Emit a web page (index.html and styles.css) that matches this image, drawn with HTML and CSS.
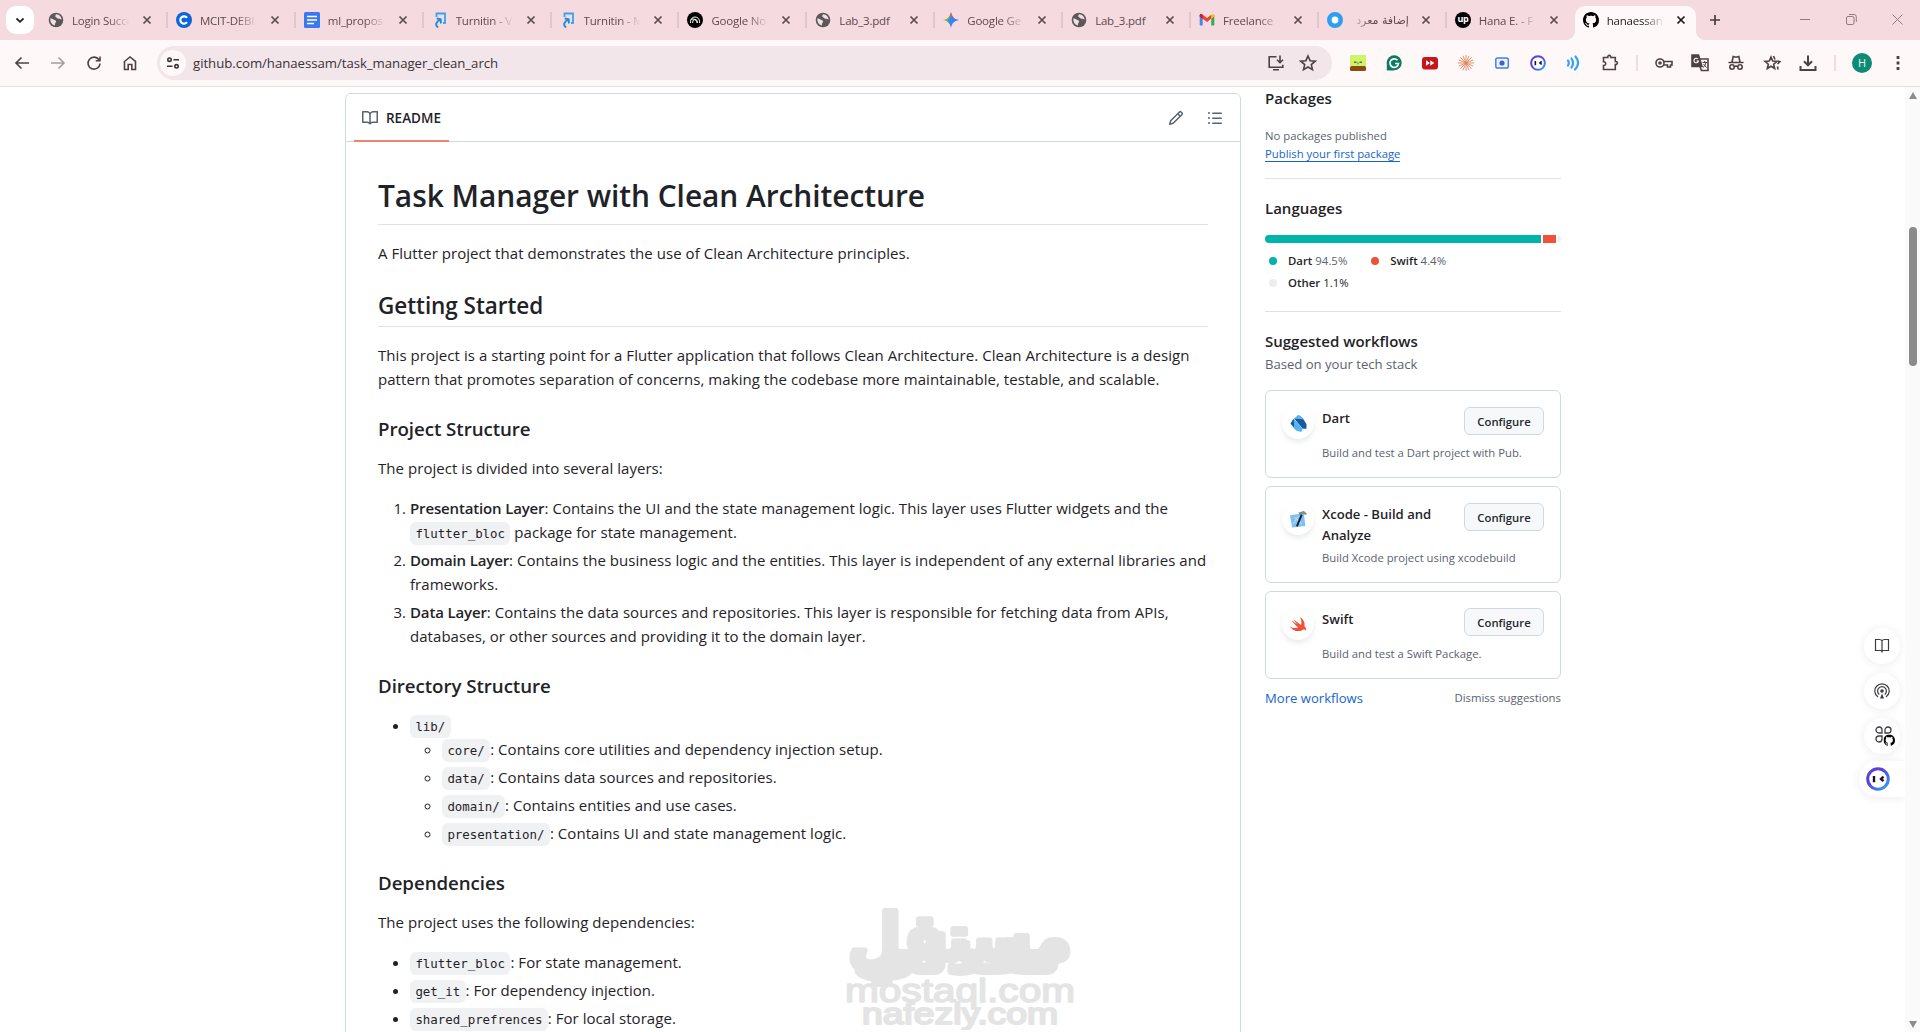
FILE: index.html
```html
<!DOCTYPE html>
<html lang="en">
  <head>
    <meta charset="UTF-8" />
    <meta name="viewport" content="width=device-width, initial-scale=1.0" />
    <title>hanaessam/task_manager_clean_arch</title>
    <link rel="stylesheet" href="styles.css">
  </head>
  <body>
    <!-- Shared icons -->
    <svg class="sprite">
      <symbol id="close" viewBox="0 0 10 10"><path d="M1.5 1.5l7 7M8.5 1.5l-7 7" stroke="currentColor" stroke-width="1.7" /></symbol>
      <symbol id="globe" viewBox="0 0 16 16">
        <circle cx="8" cy="8" r="7.3" fill="#5b585c" />
        <path d="M2.4 6.3c2.5.4 3 1.5 4.7 1.9 1.2.3 1.3 1.6.6 2.3-.6.7-.8 1.5-.7 2.9-3-.4-5-3-4.6-7.1zM8.2 2.2c-1 1.100-1.400 2.200-.4 2.800 1.200.6 1.500 1.900 3 1.700 1.300-.2 1.800.5 2.700 1 .1-2.600-1.900-5.300-5.300-5.500z" fill="#f0dfe3" />
      </symbol>
      <symbol id="turnitin" viewBox="0 0 16 16">
        <path d="M4.500 5V1.500h8.500v9.500H11" fill="none" stroke="#36a5ee" stroke-width="1.800" />
        <path d="M6 15.500c-3-2.500-2.500-5.500 2.500-8M4.800 6.500l3.900.8.2 4.200" fill="none" stroke="#1b8ce0" stroke-width="1.900" />
      </symbol>
      <symbol id="github" viewBox="0 0 16 16"><path d="M8 0C3.580 0 0 3.580 0 8c0 3.540 2.290 6.530 5.470 7.590.4.070.55-.17.55-.38 0-.19-.01-.82-.01-1.490-2.010.37-2.530-.49-2.690-.94-.09-.23-.48-.94-.82-1.130-.28-.15-.68-.52-.01-.53.63-.01 1.080.58 1.230.82.720 1.210 1.870.87 2.330.66.070-.52.280-.87.510-1.070-1.780-.2-3.640-.89-3.640-3.950 0-.87.310-1.590.82-2.150-.08-.2-.36-1.020.08-2.120 0 0 .67-.21 2.200.82.640-.18 1.320-.27 2-.27s1.360.09 2 .27c1.530-1.040 2.200-.82 2.200-.82.440 1.100.160 1.920.080 2.120.510.56.82 1.270.82 2.150 0 3.070-1.870 3.750-3.650 3.950.290.25.54.730.54 1.480 0 1.070-.01 1.930-.01 2.200 0 .21.150.46.55.38A8.010 8.010 0 0 0 16 8c0-4.420-3.580-8-8-8z" /></symbol>
      <symbol id="book" viewBox="0 0 16 16"><path d="M0 1.750A.75.75 0 0 1 .75 1h4.253c1.227 0 2.317.59 3 1.501A3.743 3.743 0 0 1 11.006 1h4.245a.75.75 0 0 1 .75.75v10.500a.75.75 0 0 1-.75.75h-4.507a2.250 2.250 0 0 0-1.591.659l-.622.621a.75.75 0 0 1-1.060 0l-.622-.621A2.250 2.250 0 0 0 5.258 13H.75a.75.75 0 0 1-.75-.75Zm7.251 10.324.004-5.073-.002-2.253A2.250 2.250 0 0 0 5.003 2.500H1.500v9h3.757a3.750 3.750 0 0 1 1.994.574ZM8.755 4.750l-.004 7.322a3.752 3.752 0 0 1 1.992-.572H14.500v-9h-3.495a2.250 2.250 0 0 0-2.250 2.250Z" /></symbol>
      <symbol id="robot" viewBox="0 0 24 24">
        <linearGradient id="ring" x1="0" y1="0" x2="1" y2="1"><stop offset="0.400" stop-color="#5b3fe0" /><stop offset="1" stop-color="#2aa8f5" /></linearGradient>
        <circle cx="12" cy="12" r="10.300" fill="#fff" stroke="url(#ring)" stroke-width="3" />
        <path d="M8 9v6.200M17.500 9.600l-2.500 2.300 2.500 2.300" fill="none" stroke="#161628" stroke-width="2.400" />
      </symbol>
    </svg>

    <!-- Browser tabs -->
    <div class="tab-strip">
      <button class="tab-search"><svg width="10" height="10" viewBox="0 0 10 10"><path d="M1.500 3.500L5 6.800l3.500-3.300" fill="none" stroke="#222" stroke-width="1.800" /></svg></button>
      <div class="tab"><svg class="favicon"><use href="#globe" /></svg><span class="tab-title">Login Succe</span><svg class="close"><use href="#close" /></svg></div>
      <div class="tab">
        <svg class="favicon" viewBox="0 0 16 16"><circle cx="8" cy="8" r="8" fill="#0b64d8" /><path d="M11 5.800a3.700 3.700 0 1 0 0 4.400" fill="none" stroke="#fff" stroke-width="2.200" /></svg>
        <span class="tab-title">MCIT-DEBI</span><svg class="close"><use href="#close" /></svg>
      </div>
      <div class="tab">
        <svg class="favicon" viewBox="0 0 16 16"><rect width="16" height="16" rx="1.500" fill="#3b78f0" /><path d="M3 4.500h10M3 8h10M3 11.500h7" stroke="#fff" stroke-width="1.600" /></svg>
        <span class="tab-title">ml_propos</span><svg class="close"><use href="#close" /></svg>
      </div>
      <div class="tab"><svg class="favicon"><use href="#turnitin" /></svg><span class="tab-title">Turnitin - V</span><svg class="close"><use href="#close" /></svg></div>
      <div class="tab"><svg class="favicon"><use href="#turnitin" /></svg><span class="tab-title">Turnitin - M</span><svg class="close"><use href="#close" /></svg></div>
      <div class="tab">
        <svg class="favicon" viewBox="0 0 16 16"><circle cx="8" cy="8" r="8" fill="#000" /><path d="M3.500 11V9.500a4.500 4.500 0 0 1 9 0V11M5.700 11V9.800a2.300 2.300 0 0 1 4.600 0V11M4 7.500c3-1.500 5.500.5 6.300 3.500" fill="none" stroke="#fff" stroke-width="1" /></svg>
        <span class="tab-title">Google No</span><svg class="close"><use href="#close" /></svg>
      </div>
      <div class="tab"><svg class="favicon"><use href="#globe" /></svg><span class="tab-title whole">Lab_3.pdf</span><svg class="close"><use href="#close" /></svg></div>
      <div class="tab">
        <svg class="favicon" viewBox="0 0 16 16">
          <linearGradient id="gem" x1="0" y1="0.200" x2="1" y2="0.600"><stop offset="0.100" stop-color="#f2b52a" /><stop offset="0.350" stop-color="#58b368" /><stop offset="0.500" stop-color="#3a82f6" /></linearGradient>
          <path d="M8 0c.8 4.500 3 7 8 8-5 1-7.200 3.500-8 8-.8-4.500-3-7-8-8 5-1 7.200-3.500 8-8z" fill="url(#gem)" /><path d="M8 0c.4 2.200 1 3.700 2.200 5L6.300 4.500C7.200 3.300 7.700 1.800 8 0z" fill="#e8584a" />
        </svg>
        <span class="tab-title">Google Ge</span><svg class="close"><use href="#close" /></svg>
      </div>
      <div class="tab"><svg class="favicon"><use href="#globe" /></svg><span class="tab-title whole">Lab_3.pdf</span><svg class="close"><use href="#close" /></svg></div>
      <div class="tab">
        <svg class="favicon" viewBox="0 0 16 16"><path d="M.7 3h3v10.500H1.500a.8.800 0 0 1-.8-.8z" fill="#4285f4" /><path d="M12.300 3h3v9.700a.8.800 0 0 1-.8.800h-2.200z" fill="#34a853" /><path d="M.7 3.600C.7 2 2.500 1.700 3.700 2.700L8 6l4.300-3.300V6.500L8 9.900.7 4.500z" fill="#ea4335" /><path d="M12.300 2.700c1.200-1 3-.6 3 .9v1l-3 2.300z" fill="#fbbc04" /><path d="M.7 3.600C.7 2 2.500 1.700 3.700 2.700v4.100l-3-2.200z" fill="#c5221f" /></svg>
        <span class="tab-title">Freelance</span><svg class="close"><use href="#close" /></svg>
      </div>
      <div class="tab">
        <svg class="favicon" viewBox="0 0 16 16"><circle cx="8" cy="8" r="5.700" fill="#fff" stroke="#2d9ff0" stroke-width="4.600" /></svg>
        <span class="tab-title rtl" dir="rtl">إضافة معرد</span><svg class="close"><use href="#close" /></svg>
      </div>
      <div class="tab last">
        <span class="favicon up">up</span>
        <span class="tab-title">Hana E. - F</span><svg class="close"><use href="#close" /></svg>
      </div>
      <div class="tab active"><svg class="favicon"><use href="#github" /></svg><span class="tab-title">hanaessan</span><svg class="close"><use href="#close" /></svg></div>
      <svg class="new-tab" viewBox="0 0 12 12"><path d="M6 1v10M1 6h10" stroke="#4a3a3f" stroke-width="1.700" /></svg>
      <div class="window-buttons">
        <svg width="11" height="11" viewBox="0 0 11 11"><path d="M0 5.500h10" stroke="#8f7c81" /></svg>
        <svg width="11" height="11" viewBox="0 0 11 11" fill="none" stroke="#8f7c81"><rect x=".5" y="2.500" width="7.500" height="8" rx="1.500" /><path d="M3 .5h5a2.300 2.300 0 0 1 2.300 2.300V8" /></svg>
        <svg width="11" height="11" viewBox="0 0 11 11"><path d="M.5.5l10 10M10.500.5l-10 10" stroke="#8f7c81" /></svg>
      </div>
    </div>

    <!-- Address bar -->
    <div class="toolbar">
      <span class="tool"><svg viewBox="0 0 18 18"><path d="M16 9H3.500M8.500 3.500L3 9l5.500 5.500" /></svg></span>
      <span class="tool disabled"><svg viewBox="0 0 18 18"><path d="M2 9h12.500M9.500 3.500L15 9l-5.500 5.500" /></svg></span>
      <span class="tool"><svg viewBox="0 0 18 18"><path d="M14 5.800A6 6 0 1 0 15 9.500M15 2.500v4.300h-4.300" /></svg></span>
      <span class="tool"><svg viewBox="0 0 18 18"><path d="M3.500 7.500L9 3l5.500 4.500V15.500h-3.700v-5H7.200v5H3.500z" /></svg></span>
      <div class="omnibox">
        <span class="site-info"><svg viewBox="0 0 16 16"><circle cx="4.500" cy="4.700" r="1.700" /><path d="M8.500 4.700H14M2 11.300h5.500" /><circle cx="11.500" cy="11.300" r="1.700" /></svg></span>
        <span class="url">github.com/hanaessam/task_manager_clean_arch</span>
        <svg class="box-icon" viewBox="0 0 18 18"><path d="M9.500 2.800H2.200v10.400h13.600v-2.500M6 15.700h6M13 1.500v6.800M10 5.700l3 3 3-3" /></svg>
        <svg class="box-icon" viewBox="0 0 18 18"><path d="M9 2l2.100 4.700 5.100.5-3.900 3.400 1.200 5L9 13l-4.500 2.600 1.200-5-3.900-3.400 5.100-.5z" /></svg>
      </div>
      <div class="extensions">
        <span class="tool"><svg class="ext" viewBox="0 0 16 16"><path d="M0 0h16v11H0z" fill="#cdf56b" /><rect y="11" width="16" height="5" rx="1.500" fill="#8c4a0c" /><path d="M4 7.200h2.500M7.500 8.400h1M9.500 7.200H12" stroke="#6a6a30" /></svg></span>
        <span class="tool"><svg class="ext" viewBox="0 0 16 16"><circle cx="8.200" cy="7.800" r="7.500" fill="#0d7a5c" /><path d="M.8 8v7.500H8z" fill="#0d7a5c" /><path d="M11.500 5.300a4.300 4.300 0 1 0 1 3.200H9" fill="none" stroke="#fff" stroke-width="1.700" /></svg></span>
        <span class="tool"><svg class="ext" viewBox="0 0 16 16"><rect y="2" width="16" height="12.500" rx="3" fill="#c4161b" /><path d="M4 5.300L8 8l-4 2.700zM8.300 5.300l4 2.700-4 2.700z" fill="#fff" /></svg></span>
        <span class="tool"><svg class="ext" viewBox="0 0 16 16"><path d="M8 0v16M0 8h16M2.300 2.300l11.400 11.400M13.700 2.300L2.300 13.700M5 .8l6 14.400M11 .8L5 15.200M.8 5l14.400 6M.8 11l14.400-6" stroke="#e28a61" stroke-width=".9" /></svg></span>
        <span class="tool"><svg class="ext" viewBox="0 0 16 16"><rect x="1.800" y="3" width="12.500" height="10" rx="1.800" fill="#eef5ff" stroke="#3587e8" stroke-width="1.500" /><circle cx="8" cy="8" r="2.600" fill="#4b5bd6" /></svg></span>
        <span class="tool"><svg class="ext"><use href="#robot" /></svg></span>
        <span class="tool"><svg class="ext" viewBox="0 0 16 16"><path d="M2 5.500q1.600 2.500 0 5M5.500 3.500q3 4.500 0 9M9.500 1.500q5.500 6.500-.5 13" fill="none" stroke="#33a4f0" stroke-width="2.200" stroke-linecap="round" /></svg></span>
        <span class="tool"><svg viewBox="0 0 18 18"><path d="M2.500 3.500h4.300c-.5-2.800 3.400-2.800 3 0h4.500v4c2.800-.4 2.800 3.500 0 3v5H2.500v-4c2.900.3 2.900-4 0-3.700z" /></svg></span>
      </div>
      <span class="divider"></span>
      <div class="extensions">
        <span class="tool"><svg viewBox="0 0 18 18"><circle cx="5" cy="9" r="4" /><circle cx="5" cy="9" r="1" /><path d="M9 7.500h8v3.500h-1.500v2h-3v-2H9" /></svg></span>
        <span class="tool"><svg viewBox="0 0 18 18"><path d="M1 1h6.500l3.500 11.500H1z" fill="#4e4045" /><path d="M9 5h8v11.500h-6.500L9 13" /><path d="M11.500 8.500h4.500M13.700 7v1.500M15 8.500c-.5 2.500-1.500 4-3 5M12.500 10l3 3.500" stroke-width="1" /><path d="M7 5a2.300 2.300 0 1 0 .5 2H5.500" stroke="#fff" stroke-width="1.100" /></svg></span>
        <span class="tool"><svg viewBox="0 0 18 18"><path d="M1.500 8.500h15M5 8l1.200-5.500L9 3.200l2.800-.7L13 8" /><circle cx="5" cy="13" r="2.200" /><circle cx="13" cy="13" r="2.200" /><path d="M7.200 12.500q1.800-.8 3.600 0" /></svg></span>
        <span class="tool"><svg viewBox="0 0 18 18"><path d="M8 3l1.700 4 4.300.4-3.300 2.800 1 4.300L8 12.300l-3.700 2.200 1-4.300L2 7.400 6.300 7z" /><path d="M10.500 2l1.500 3.500M14.500 7.300l2.500.3-2.500 2.400M14.500 12.500l.5 3" /></svg></span>
        <span class="tool"><svg viewBox="0 0 18 18"><path d="M9 1.500v9.500M5 7.300l4 4 4-4M1.500 12v4h15v-4" stroke-width="2" /></svg></span>
      </div>
      <span class="divider"></span>
      <div class="extensions">
        <span class="tool"><span class="avatar">H</span></span>
        <span class="tool"><svg viewBox="0 0 18 18"><path d="M9 2v3M9 7.500v3M9 13v3" stroke-width="2.800" /></svg></span>
      </div>
    </div>

    <!-- Page -->
    <div class="page">
      <main class="readme">
        <div class="readme-header">
          <span class="readme-tab"><svg class="octicon"><use href="#book" /></svg>README</span>
          <svg class="octicon" viewBox="0 0 16 16"><path d="M11.013 1.427a1.750 1.750 0 0 1 2.474 0l1.086 1.086a1.750 1.750 0 0 1 0 2.474l-8.610 8.610c-.21.210-.47.364-.756.445l-3.251.93a.75.75 0 0 1-.927-.928l.929-3.250c.081-.286.235-.547.445-.758l8.610-8.610Zm.176 4.823L9.750 4.810l-6.286 6.287a.253.253 0 0 0-.064.108l-.558 1.953 1.953-.558a.253.253 0 0 0 .108-.064Zm1.238-3.763a.25.25 0 0 0-.354 0L10.811 3.750l1.439 1.440 1.263-1.263a.25.25 0 0 0 0-.354Z" /></svg>
          <svg class="octicon" viewBox="0 0 16 16"><path d="M5.750 2.500h8.500a.75.75 0 0 1 0 1.500h-8.500a.75.75 0 0 1 0-1.500Zm0 5h8.500a.75.75 0 0 1 0 1.500h-8.500a.75.75 0 0 1 0-1.500Zm0 5h8.500a.75.75 0 0 1 0 1.500h-8.500a.75.75 0 0 1 0-1.500ZM2 14a1 1 0 1 1 0-2 1 1 0 0 1 0 2Zm1-6a1 1 0 1 1-2 0 1 1 0 0 1 2 0ZM2 4a1 1 0 1 1 0-2 1 1 0 0 1 0 2Z" /></svg>
        </div>
        <article class="markdown">
          <h1>Task Manager with Clean Architecture</h1>
          <p>A Flutter project that demonstrates the use of Clean Architecture principles.</p>
          <h2>Getting Started</h2>
          <p>This project is a starting point for a Flutter application that follows Clean Architecture. Clean Architecture is a design<br>pattern that promotes separation of concerns, making the codebase more maintainable, testable, and scalable.</p>
          <h3>Project Structure</h3>
          <p>The project is divided into several layers:</p>
          <ol>
            <li><strong>Presentation Layer</strong>: Contains the UI and the state management logic. This layer uses Flutter widgets and the<br><code>flutter_bloc</code> package for state management.</li>
            <li><strong>Domain Layer</strong>: Contains the business logic and the entities. This layer is independent of any external libraries and<br>frameworks.</li>
            <li><strong>Data Layer</strong>: Contains the data sources and repositories. This layer is responsible for fetching data from APIs,<br>databases, or other sources and providing it to the domain layer.</li>
          </ol>
          <h3>Directory Structure</h3>
          <ul>
            <li><code>lib/</code>
              <ul>
                <li><code>core/</code>: Contains core utilities and dependency injection setup.</li>
                <li><code>data/</code>: Contains data sources and repositories.</li>
                <li><code>domain/</code>: Contains entities and use cases.</li>
                <li><code>presentation/</code>: Contains UI and state management logic.</li>
              </ul>
            </li>
          </ul>
          <h3>Dependencies</h3>
          <p>The project uses the following dependencies:</p>
          <ul>
            <li><code>flutter_bloc</code>: For state management.</li>
            <li><code>get_it</code>: For dependency injection.</li>
            <li><code>shared_prefrences</code>: For local storage.</li>
          </ul>
        </article>
      </main>

      <aside class="sidebar">
        <section class="packages">
          <h4>Packages</h4>
          <p class="small">No packages published<br><a class="underlined" href="#">Publish your first package</a></p>
        </section>
        <section class="languages">
          <h4>Languages</h4>
          <div class="bar">
            <span class="dart" style="width: 94.5%"></span>
            <span class="swift" style="width: 4.4%"></span>
            <span class="other" style="width: 1.1%"></span>
          </div>
          <ul class="legend">
            <li><i class="dart"></i><b>Dart</b> 94.5%</li>
            <li><i class="swift"></i><b>Swift</b> 4.4%</li>
            <li class="dark"><i class="other"></i><b>Other</b> 1.1%</li>
          </ul>
        </section>
        <section class="workflows">
          <h4>Suggested workflows</h4>
          <p class="based">Based on your tech stack</p>
          <div class="card">
            <span class="card-icon"><svg viewBox="0 0 16 16"><path d="M4 3.500L8 0l4 3 3.500 5.500V13H12z" fill="#1a5aa0" /><path d="M4 3.500L8 0l4 3 .5 1z" fill="#55b5f0" /><path d="M3.500 3.500L.5 8l5 6.500 5 1.500 1.500-3z" fill="#55b5f0" /><path d="M3.500 3.500L.5 8 4 12z" fill="#1a5aa0" /></svg></span>
            <div class="card-body">
              <div class="card-top"><h5>Dart</h5><button>Configure</button></div>
              <p>Build and test a Dart project with Pub.</p>
            </div>
          </div>
          <div class="card">
            <span class="card-icon"><svg viewBox="0 0 16 16"><path d="M0 4l13-2 1.500 12L2 15.500z" fill="#7fbff5" /><path d="M3 12L8 5M4 6l7 6" stroke="#b9defb" /><path d="M8 1.500l5-1.500 3 2.500-1.500 1.200-2-1-3.500.8z" fill="#8a8a8a" /><path d="M11 3.500L6.500 14.500" stroke="#17202b" stroke-width="1.800" /></svg></span>
            <div class="card-body">
              <div class="card-top"><h5>Xcode - Build and Analyze</h5><button>Configure</button></div>
              <p>Build Xcode project using xcodebuild</p>
            </div>
          </div>
          <div class="card">
            <span class="card-icon"><svg viewBox="0 0 18 16"><path d="M10.500 0c4 2.700 5.700 6.500 4.800 9.500 1.800 2 2.200 4 1.700 5.200-1-1.500-2.500-1.500-3.700-1C8.500 16.500 3 14.500 0 10c3 2 6.300 2.300 8.700 1C5.500 8.600 3.300 6 1.500 3.200c2.300 2 4.300 3.500 6 4.500C6 6 4.600 4 3.500 2.200 6.300 4.800 9 7 11.700 8.500c.8-2.700.3-5.700-1.200-8.500z" fill="#f05138" /></svg></span>
            <div class="card-body">
              <div class="card-top"><h5>Swift</h5><button>Configure</button></div>
              <p>Build and test a Swift Package.</p>
            </div>
          </div>
          <div class="workflow-links"><a href="#">More workflows</a><span>Dismiss suggestions</span></div>
        </section>
      </aside>

      <!-- Extension shortcuts floating over the page -->
      <div class="floating">
        <span class="bubble"><svg viewBox="0 0 16 16"><path d="M8 2.500v12M8 2.800C7.500 1.800 6.500 1.500 5.500 1.500h-4v11h5c1 0 1.500.5 1.500 1 0-.5.500-1 1.500-1h5v-11h-4c-1 0-2 .3-2.500 1.300z" fill="none" stroke="#3d3d42" stroke-width="1.200" /></svg></span>
        <span class="bubble"><svg viewBox="0 0 16 16" fill="none" stroke="#3d3d42" stroke-width="1.200"><path d="M4 14a7.200 7.200 0 1 1 8 0M5.300 11.500a4.400 4.400 0 1 1 5.400 0" /><circle cx="8" cy="8" r="1.800" fill="#3d3d42" stroke="none" /><path d="M8 10.500l2 5H6z" fill="#3d3d42" stroke="none" /></svg></span>
        <span class="bubble"><svg class="wide" viewBox="0 0 20 20"><g fill="none" stroke="#3d3d42" stroke-width="1.300"><path d="M7 7H4a3 3 0 1 1 3-3zM10 7V4a3 3 0 1 1 3 3zM7 10v3a3 3 0 1 1-3-3z" /></g><use href="#github" x="8.500" y="8.500" width="11.500" height="11.500" /></svg></span>
        <span class="bubble pill"><svg><use href="#robot" /></svg></span>
      </div>

      <div class="scrollbar"><i class="up-arrow"></i><i class="thumb"></i><i class="down-arrow"></i></div>
    </div>

    <!-- Watermark -->
    <svg class="watermark" viewBox="0 0 240 130">
      <g fill="#e4e4e4" stroke="#e4e4e4" stroke-linejoin="round">
        <text class="wm-ar" x="120" y="60" font-size="64" stroke-width="6" textLength="224" lengthAdjust="spacingAndGlyphs">مستقل</text>
        <text class="wm-ar" x="117" y="72" font-size="50" stroke-width="6" textLength="206" lengthAdjust="spacingAndGlyphs">نفذلي</text>
        <text x="120" y="102" font-size="34" stroke-width="1.600" textLength="230" lengthAdjust="spacingAndGlyphs">mostaql.com</text>
        <text x="120" y="124" font-size="30" stroke-width="2" textLength="196" lengthAdjust="spacingAndGlyphs">nafezly.com</text>
      </g>
    </svg>
  </body>
</html>
```
FILE: styles.css
```css
* {
  box-sizing: border-box;
  margin: 0;
  padding: 0;
}

body {
  display: flex;
  flex-direction: column;
  height: 100vh;
  overflow: hidden;
  font-family: "Open Sans", "Noto Sans", sans-serif;
  background-color: #fff;
  color: #1f2328;
}

a {
  color: #1465cc;
  text-decoration: none;
}

button {
  font-family: inherit;
}

.sprite {
  position: absolute;
  width: 0;
  height: 0;
}

/* Tabs */
.tab-strip {
  display: flex;
  height: 40px;
  flex: none;
  background-color: #f5dbdf;
  padding-left: 6px;
}

.tab-search {
  display: flex;
  align-items: center;
  justify-content: center;
  width: 28px;
  height: 28px;
  margin: 6px 6px 0 0;
  border: none;
  border-radius: 10px;
  background-color: #fff;
}

.tab {
  display: flex;
  align-items: center;
  width: 127.9px;
  height: 40px;
  padding-left: 8px;
  flex: none;
  color: #5d4a50;
}

.tab::after {
  content: "";
  width: 2px;
  height: 16px;
  margin-left: 14px;
  background-color: #e3c6cb;
}

.tab.last::after,
.tab.active::after {
  display: none;
}

.favicon {
  width: 16px;
  height: 16px;
  flex: none;
}

.up {
  border-radius: 50%;
  background-color: #000;
  color: #fff;
  font-size: 9px;
  font-weight: bold;
  line-height: 13px;
  text-align: center;
  letter-spacing: -0.5px;
}

.tab-title {
  width: 60px;
  margin: 2px 8px 0 8px;
  overflow: hidden;
  white-space: nowrap;
  font-size: 11.5px;
  line-height: 18px;
  letter-spacing: -0.2px;
  mask-image: linear-gradient(to right, #000 60%, transparent 96%);
}

.whole {
  mask-image: none;
}

.rtl {
  width: 58px;
  margin-right: 10px;
  font-family: "DejaVu Sans", sans-serif;
  font-size: 11px;
  mask-image: linear-gradient(to left, #000 65%, transparent);
}

.close {
  width: 10px;
  height: 10px;
  margin-left: 2px;
  flex: none;
}

.tab.active {
  position: relative;
  width: 121px;
  height: 34px;
  margin: 6px 0 0 0;
  padding: 0 0 6px 8px;
  border-radius: 10px 10px 0 0;
  background-color: #fff8f8;
  color: #1f1a1c;
}

.tab.active .tab-title {
  margin-right: 7px;
}

/* Flared feet of the selected tab */
.tab.active::before {
  content: "";
  position: absolute;
  left: -10px;
  right: -10px;
  bottom: 0;
  height: 10px;
  background: radial-gradient(circle at 0 0, transparent 10px, #fff8f8 10.5px) left / 10px 10px no-repeat,
    radial-gradient(circle at 100% 0, transparent 10px, #fff8f8 10.5px) right / 10px 10px no-repeat;
}

.new-tab {
  width: 12px;
  height: 12px;
  margin: 14px 0 0 13px;
}

.window-buttons {
  display: flex;
  gap: 35px;
  margin: 14px 17px 0 auto;
}

/* Toolbar */
.toolbar {
  display: flex;
  align-items: center;
  height: 47px;
  flex: none;
  padding: 0 4px;
  background-color: #fff8f8;
  border-bottom: 1px solid #e9dfe1;
}

.tool {
  display: flex;
  align-items: center;
  justify-content: center;
  width: 36px;
}

.tool svg,
.box-icon {
  width: 18px;
  height: 18px;
  fill: none;
  stroke: #4e4045;
  stroke-width: 1.6;
}

.tool .ext {
  width: 16px;
  height: 16px;
  stroke: none;
}

.disabled {
  opacity: 0.5;
}

.omnibox {
  display: flex;
  align-items: center;
  flex: 1;
  height: 34px;
  margin: 0 8px 0 9px;
  padding: 0 15px 0 3px;
  border-radius: 17px;
  background-color: #f2e6ea;
}

.site-info {
  display: flex;
  align-items: center;
  justify-content: center;
  width: 26px;
  height: 26px;
  margin-right: 7px;
  border-radius: 50%;
  background-color: #fff8f8;
}

.site-info svg {
  width: 16px;
  height: 16px;
  fill: none;
  stroke: #3b3034;
  stroke-width: 1.6;
}

.url {
  flex: 1;
  font-size: 13.2px;
  letter-spacing: -0.03px;
  color: #3b3338;
}

.box-icon + .box-icon {
  margin-left: 14px;
}

.extensions {
  display: flex;
}

.divider {
  width: 2px;
  height: 16px;
  margin: 0 8px;
  background-color: #f5dbdf;
}

.avatar {
  width: 20px;
  height: 20px;
  border-radius: 50%;
  background-color: #0f8a75;
  color: #e5fff8;
  font-size: 11px;
  line-height: 20px;
  text-align: center;
}

/* Page */
.page {
  display: flex;
  align-items: flex-start;
  gap: 24px;
  position: relative;
  flex: 1;
  min-height: 0;
  padding: 6px 0 0 345px;
  overflow: hidden;
}

.readme {
  width: 896px;
  height: 1000px;
  flex: none;
  border: 1px solid #d1d9e0;
  border-radius: 6px;
}

.readme-header {
  display: flex;
  align-items: center;
  height: 48px;
  padding: 0 17px 0 8px;
  border-bottom: 1px solid #d1d9e0;
}

.readme-header > .octicon:nth-of-type(2) {
  margin-left: 23px;
}

.octicon {
  width: 16px;
  height: 16px;
  fill: #59636e;
}

.readme-tab {
  display: flex;
  align-items: center;
  gap: 8px;
  height: 48px;
  margin: 1px auto 0 0;
  padding: 2px 8px 0;
  border-bottom: 2px solid #f0836f;
  font-size: 13.5px;
  font-weight: 600;
  white-space: nowrap;
}

.markdown {
  padding: 32px;
  font-size: 15px;
  line-height: 24px;
  letter-spacing: 0.05px;
  white-space: nowrap;
}

h1,
h2,
h3 {
  font-weight: 600;
  letter-spacing: -0.05px;
}

h1 {
  font-size: 29.9px;
  line-height: 44px;
  margin-bottom: 16px;
  padding-bottom: 6px;
  border-bottom: 1px solid #dde2e7;
}

h2 {
  font-size: 22.5px;
  line-height: 34px;
  margin: 24px 0 16px;
  padding-bottom: 3px;
  border-bottom: 1px solid #dde2e7;
}

h3 {
  font-size: 18.7px;
  line-height: 27px;
  margin: 24px 0 14px;
}

.markdown p,
.markdown > ul,
.markdown > ol {
  margin-bottom: 16px;
}

.markdown ul,
.markdown ol {
  padding-left: 32px;
}

.markdown li + li {
  margin-top: 4px;
}

strong {
  font-weight: 600;
  letter-spacing: -0.15px;
}

code {
  padding: 4px 5.4px;
  border-radius: 6px;
  background-color: #f0f1f3;
  font-family: "DejaVu Sans Mono", monospace;
  font-size: 12.42px;
  line-height: 1;
  letter-spacing: 0;
}

/* Sidebar */
.sidebar {
  width: 296px;
}

.sidebar section {
  border-bottom: 1px solid #dde2e7;
}

.sidebar .workflows {
  border: none;
}

h4 {
  font-size: 15px;
  font-weight: 600;
  line-height: 24px;
}

.packages {
  height: 93px;
  margin-top: -7px;
}

.small {
  margin-top: 17px;
  font-size: 11.3px;
  line-height: 18px;
  color: #59636e;
}

.underlined {
  border-bottom: 1px solid #1465cc;
}

.languages {
  height: 133px;
  padding-top: 17px;
}

.bar {
  display: flex;
  gap: 2px;
  height: 8px;
  margin: 15px 0 9px;
  border-radius: 6px;
  overflow: hidden;
}

.dart {
  background-color: #00b4ab;
}

.swift {
  background-color: #f05138;
}

.other {
  background-color: #ededed;
}

.legend {
  display: flex;
  flex-wrap: wrap;
  list-style: none;
  font-size: 11.4px;
  line-height: 18px;
  color: #59636e;
}

.legend li {
  margin: 0 20px 4px 4px;
  white-space: nowrap;
}

.legend b {
  color: #1f2328;
  font-weight: 600;
}

.legend .dark {
  color: #1f2328;
}

.legend i {
  display: inline-block;
  width: 8px;
  height: 8px;
  margin-right: 11px;
  border-radius: 50%;
}

.workflows {
  padding-top: 17px;
}

.based {
  font-size: 13.1px;
  line-height: 21px;
  color: #59636e;
  margin: 1px 0 15px;
}

.card {
  display: flex;
  gap: 8px;
  margin-bottom: 8px;
  padding: 16px 16px 15px;
  border: 1px solid #d1d9e0;
  border-radius: 6px;
}

.card-icon {
  display: flex;
  align-items: center;
  justify-content: center;
  width: 32px;
  height: 32px;
  flex: none;
  border-radius: 50%;
  background-color: #fff;
  box-shadow: 0 3px 5px rgba(140, 149, 159, 0.2);
}

.card-icon svg {
  width: 17px;
  height: 17px;
}

.card-body {
  flex: 1;
}

.card-top {
  display: flex;
  align-items: flex-start;
  justify-content: space-between;
  min-height: 34px;
}

h5 {
  padding-top: 1px;
  font-size: 13.1px;
  font-weight: 600;
  line-height: 21px;
}

.card button {
  width: 80px;
  height: 28px;
  flex: none;
  border: 1px solid #d1d9e0;
  border-radius: 6px;
  background-color: #f6f8fa;
  color: #25292e;
  font-size: 11.3px;
  font-weight: 600;
}

.card p {
  margin-top: 3px;
  font-size: 11.3px;
  line-height: 18px;
  color: #59636e;
}

.workflow-links {
  display: flex;
  align-items: center;
  justify-content: space-between;
  font-size: 13.1px;
  line-height: 22px;
}

.workflow-links span {
  color: #59636e;
  font-size: 11.4px;
}

/* Floating shortcuts */
.floating {
  display: flex;
  flex-direction: column;
  align-items: flex-end;
  gap: 9px;
  position: absolute;
  top: 541px;
  right: 15px;
}

.bubble {
  display: flex;
  align-items: center;
  justify-content: center;
  width: 36px;
  height: 36px;
  margin-right: 5px;
  border-radius: 50%;
  background-color: #fff;
  box-shadow: 0 1px 10px rgba(0, 0, 0, 0.08);
}

.bubble svg {
  width: 16px;
  height: 16px;
}

.bubble .wide {
  width: 20px;
  height: 20px;
  margin-left: 6px;
}

.pill {
  justify-content: flex-start;
  width: 46px;
  margin: -2px 0 0;
  padding-left: 7px;
  border-radius: 18px 0 0 18px;
}

.pill svg {
  width: 24px;
  height: 24px;
}

/* Scrollbar */
.scrollbar {
  display: flex;
  flex-direction: column;
  align-items: center;
  position: absolute;
  top: 0;
  right: 0;
  bottom: 0;
  width: 15px;
  background-color: #fafafa;
}

.up-arrow,
.down-arrow {
  border: 4.5px solid transparent;
  border-top: none;
  border-bottom: 7px solid #8b8b8b;
  margin-top: 5px;
}

.down-arrow {
  margin: auto 0 4px;
  transform: rotate(180deg);
}

.thumb {
  width: 8px;
  height: 139px;
  margin-top: 128px;
  border-radius: 4px;
  background-color: #8b8b8b;
}

/* Watermark */
.watermark {
  position: absolute;
  left: 840px;
  top: 900px;
  width: 240px;
  height: 130px;
  font-family: "Liberation Sans", sans-serif;
  text-anchor: middle;
}

.wm-ar {
  font-family: "DejaVu Sans", sans-serif;
  font-weight: bold;
}
```
